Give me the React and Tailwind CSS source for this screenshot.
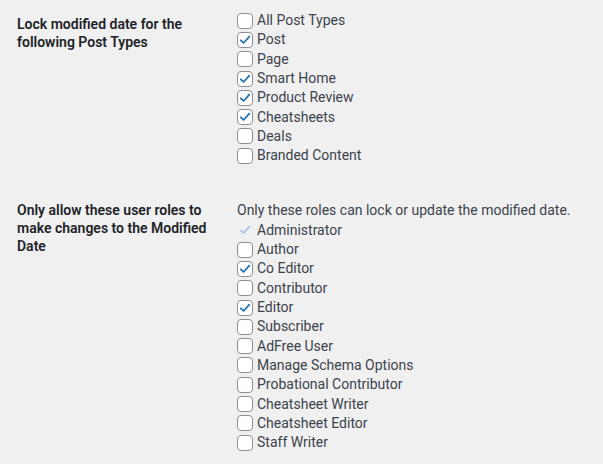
import React from "react";

const postTypes = [
  { label: "All Post Types", checked: false },
  { label: "Post", checked: true },
  { label: "Page", checked: false },
  { label: "Smart Home", checked: true },
  { label: "Product Review", checked: true },
  { label: "Cheatsheets", checked: true },
  { label: "Deals", checked: false },
  { label: "Branded Content", checked: false },
];

const roles = [
  { label: "Administrator", checked: true, disabled: true },
  { label: "Author", checked: false },
  { label: "Co Editor", checked: true },
  { label: "Contributor", checked: false },
  { label: "Editor", checked: true },
  { label: "Subscriber", checked: false },
  { label: "AdFree User", checked: false },
  { label: "Manage Schema Options", checked: false },
  { label: "Probational Contributor", checked: false },
  { label: "Cheatsheet Writer", checked: false },
  { label: "Cheatsheet Editor", checked: false },
  { label: "Staff Writer", checked: false },
];

function Check({ checked, disabled }) {
  return (
    <span
      className={
        "flex h-4 w-4 shrink-0 items-center justify-center rounded-[4px] " +
        (disabled ? "border border-transparent bg-transparent" : "border border-[#8c8f94] bg-white")
      }
    >
      {checked && (
        <svg viewBox="0 0 16 16" className="h-[14px] w-[14px]">
          <path
            d="M3.2 8.3 L6.4 11.4 L12.9 4.2"
            fill="none"
            stroke={disabled ? "#a7c4e0" : "#2271b1"}
            strokeWidth="2"
            strokeLinecap="round"
            strokeLinejoin="round"
          />
        </svg>
      )}
    </span>
  );
}

function Row({ item }) {
  return (
    <label className="flex h-[19.3px] items-center gap-1">
      <Check checked={item.checked} disabled={item.disabled} />
      <span className="text-[14px] text-[#3c434a]">{item.label}</span>
    </label>
  );
}

export default function App() {
  return (
    <div
      className="min-h-[464px] w-[603px] bg-[#f0f0f1] pl-[17px] pt-[11px]"
      style={{ fontFamily: "Roboto, 'Noto Sans', sans-serif" }}
    >
      <div className="flex">
        <div className="w-[220px] shrink-0 pt-[4px] text-[14px] font-semibold leading-[18px] text-[#1d2327]">
          Lock modified date for the
          <br />
          following Post Types
        </div>
        <div className="flex flex-col">
          {postTypes.map((p) => (
            <Row key={p.label} item={p} />
          ))}
        </div>
      </div>

      <div className="mt-[36px] flex">
        <div className="w-[220px] shrink-0 pr-[20px] text-[14px] font-semibold leading-[18px] text-[#1d2327]">
          Only allow these user roles to make changes to the Modified Date
        </div>
        <div className="flex flex-col">
          <p className="h-[19.3px] text-[14px] leading-[19.3px] text-[#3c434a]">
            Only these roles can lock or update the modified date.
          </p>
          {roles.map((r) => (
            <Row key={r.label} item={r} />
          ))}
        </div>
      </div>
    </div>
  );
}
